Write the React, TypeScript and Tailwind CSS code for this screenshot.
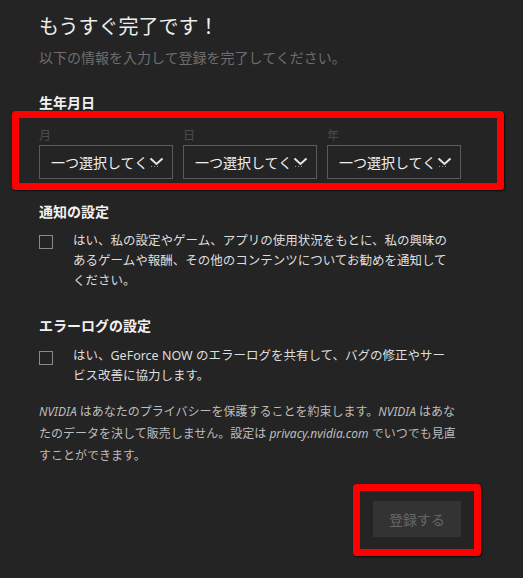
import React from "react";

const Chevron = () => (
  <svg width="16" height="12" viewBox="0 0 16 12" className="ml-[1px] mt-[2px] shrink-0">
    <polyline points="1.5,1.5 7.5,7 13.5,1.5" fill="none" stroke="#e6e6e6" strokeWidth="2" />
    <rect x="2" y="9" width="1" height="1" fill="#9a9a9a" />
    <rect x="5" y="9" width="1" height="1" fill="#9a9a9a" />
    <rect x="8" y="9" width="1" height="1" fill="#9a9a9a" />
  </svg>
);

const Select = ({ label }: { label: string }) => (
  <div className="w-[134px]">
    <div className="text-[12px] leading-[16px] text-[#4c4c4c]">{label}</div>
    <div className="mt-[1px] h-[34px] border border-[#5a5a5a] flex items-center pl-[11px] overflow-hidden">
      <span className="text-[14px] text-[#f0f0f0] whitespace-nowrap">一つ選択してく</span>
      <Chevron />
    </div>
  </div>
);

const Checkbox = () => (
  <div className="mt-[4px] w-[14px] h-[14px] border border-[#8a8a8a] shrink-0" />
);

const App: React.FC = () => {
  return (
    <div
      className="w-[523px] h-[578px] bg-[#242424] overflow-hidden pt-[13px]"
      style={{ fontFamily: '"Noto Sans", "Noto Sans CJK JP", sans-serif' }}
    >
      {/* Header */}
      <div className="px-[39px]">
        <h1 className="text-[20px] leading-[28px] text-[#eeeeee]">もうすぐ完了です！</h1>
        <p className="mt-[7px] text-[14px] leading-[20px] text-[#6e6e6e]">
          以下の情報を入力して登録を完了してください。
        </p>
        <h2 className="mt-[27px] text-[14px] leading-[16px] font-bold text-[#f2f2f2]">生年月日</h2>
      </div>

      {/* Birth date */}
      <div className="ml-[12px] w-[492px] border-[7px] border-[#ff0000] rounded-[4px] shadow-[1px_1px_2px_rgba(0,0,0,0.7)] pl-[20px] pt-[10px] pb-[4px]">
        <div className="flex gap-[10px]">
          <Select label="月" />
          <Select label="日" />
          <Select label="年" />
        </div>
      </div>

      {/* Notifications */}
      <div className="px-[39px]">
        <h2 className="mt-[12px] text-[14px] leading-[20px] font-bold text-[#f2f2f2]">通知の設定</h2>
        <div className="mt-[9px] flex gap-[20px]">
          <Checkbox />
          <p className="text-[12.5px] leading-[20px] text-[#dedede] whitespace-nowrap">
            はい、私の設定やゲーム、アプリの使用状況をもとに、私の興味の
            <br />
            あるゲームや報酬、その他のコンテンツについてお勧めを通知して
            <br />
            ください。
          </p>
        </div>

        <h2 className="mt-[25px] text-[14px] leading-[20px] font-bold text-[#f2f2f2]">エラーログの設定</h2>
        <div className="mt-[10px] flex gap-[20px]">
          <div className="mt-[5px] w-[14px] h-[14px] border border-[#8a8a8a] shrink-0" />
          <p className="text-[12.5px] leading-[20px] text-[#dedede] whitespace-nowrap">
            はい、GeForce NOW のエラーログを共有して、バグの修正やサー
            <br />
            ビス改善に協力します。
          </p>
        </div>

        <p className="mt-[15px] text-[12px] leading-[22px] text-[#bdbdbd] whitespace-nowrap">
          <i>NVIDIA</i> はあなたのプライバシーを保護することを約束します。<i>NVIDIA</i> はあな
          <br />
          たのデータを決して販売しません。設定は <i>privacy.nvidia.com</i> でいつでも見直
          <br />
          すことができます。
        </p>
      </div>

      {/* Submit */}
      <div className="mt-[17px] flex justify-end pr-[42px]">
        <div className="border-[7px] border-[#ff0000] rounded-[4px] shadow-[1px_1px_2px_rgba(0,0,0,0.7)] pl-[13px] pr-[13px] pt-[10px] pb-[12px]">
          <button className="w-[88px] h-[36px] bg-[#333333] text-[14px] text-[#666666]">登録する</button>
        </div>
      </div>
    </div>
  );
};

export default App;
